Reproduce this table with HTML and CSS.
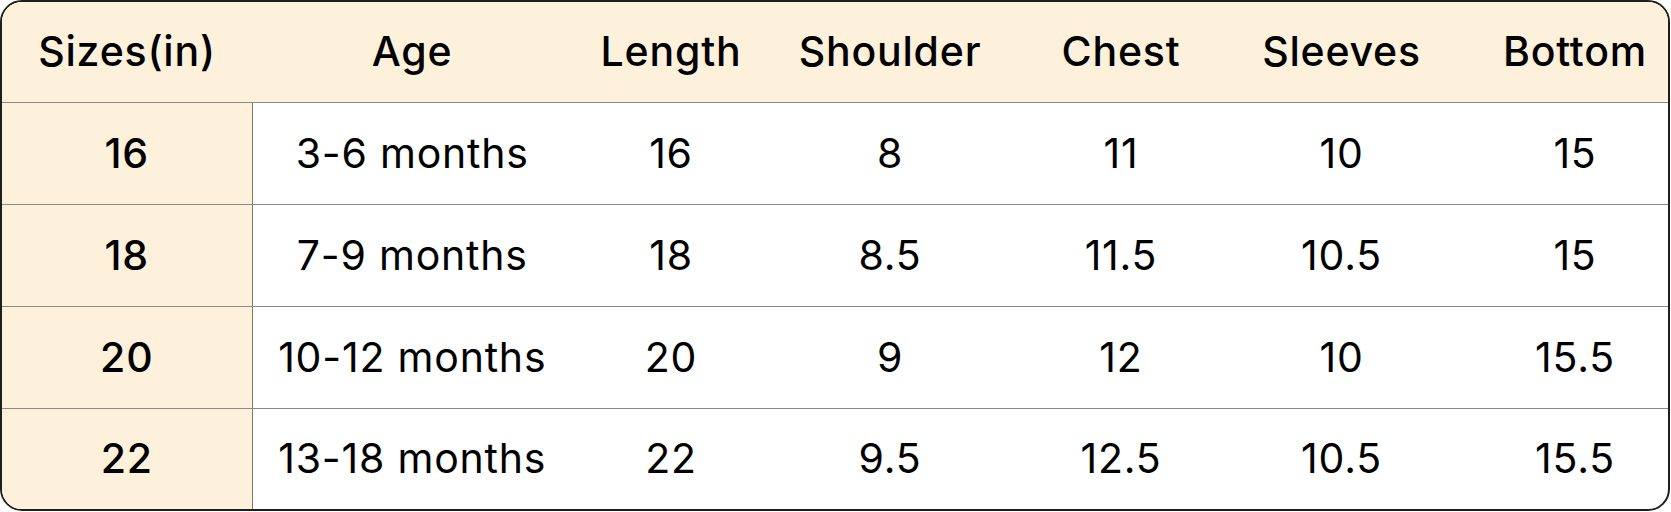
FILE: index.html
```html
<!DOCTYPE html>
<html lang="en">
<head>
<meta charset="utf-8">
<title>Size chart</title>
<link rel="stylesheet" href="styles.css">
</head>
<body>
<div class="chart">
  <table class="size-table">
    <colgroup>
      <col class="c-size">
      <col class="c-age">
      <col class="c-length">
      <col class="c-shoulder">
      <col class="c-chest">
      <col class="c-sleeves">
      <col class="c-bottom">
    </colgroup>
    <thead>
      <tr class="head-row">
        <th>Sizes(in)</th>
        <th>Age</th>
        <th>Length</th>
        <th>Shoulder</th>
        <th>Chest</th>
        <th>Sleeves</th>
        <th class="last">Bottom</th>
      </tr>
    </thead>
    <tbody>
      <tr class="row">
        <th class="size">16</th>
        <td>3-6 months</td>
        <td>16</td>
        <td>8</td>
        <td>11</td>
        <td>10</td>
        <td class="last">15</td>
      </tr>
      <tr class="row">
        <th class="size">18</th>
        <td>7-9 months</td>
        <td>18</td>
        <td>8.5</td>
        <td>11.5</td>
        <td>10.5</td>
        <td class="last">15</td>
      </tr>
      <tr class="row">
        <th class="size">20</th>
        <td>10-12 months</td>
        <td>20</td>
        <td>9</td>
        <td>12</td>
        <td>10</td>
        <td class="last">15.5</td>
      </tr>
      <tr class="row row-end">
        <th class="size">22</th>
        <td>13-18 months</td>
        <td>22</td>
        <td>9.5</td>
        <td>12.5</td>
        <td>10.5</td>
        <td class="last">15.5</td>
      </tr>
    </tbody>
  </table>
</div>
</body>
</html>
```
FILE: styles.css
```css
html, body {
  margin: 0;
  padding: 0;
  background: #ffffff;
}

body {
  font-family: Inter, "Noto Sans", "DejaVu Sans", sans-serif;
  color: #000000;
}

.chart {
  box-sizing: border-box;
  width: 1670px;
  height: 511px;
  border: 2px solid #1e1e1e;
  border-radius: 22px;
  overflow: hidden;
  background: #ffffff;
}

.size-table {
  width: 1666px;
  height: 507px;
  border-collapse: collapse;
  border-spacing: 0;
  table-layout: fixed;
}

.c-size { width: 250px; }
.c-age { width: 320px; }
.c-length { width: 198px; }
.c-shoulder { width: 240px; }
.c-chest { width: 222px; }
.c-sleeves { width: 219px; }
.c-bottom { width: 217px; }

.size-table th,
.size-table td {
  padding: 0;
  text-align: center;
  vertical-align: middle;
  font-size: 41px;
  line-height: 1;
  white-space: nowrap;
  letter-spacing: 0.8px;
}

.head-row {
  height: 100px;
  background: #fdf1db;
}

.head-row th {
  font-weight: 500;
  border-bottom: 1px solid #8d8a82;
}

.row {
  height: 102px;
}

.row td,
.row th {
  border-bottom: 1px solid #8d8a82;
  font-weight: 400;
}

.row-end {
  height: 101px;
}

.row-end td,
.row-end th {
  border-bottom: none;
}

.row .size {
  background: #fdf1db;
  font-weight: 500;
  border-right: 1px solid #7d7568;
}

.size-table .last {
  padding-left: 31px;
}
```
